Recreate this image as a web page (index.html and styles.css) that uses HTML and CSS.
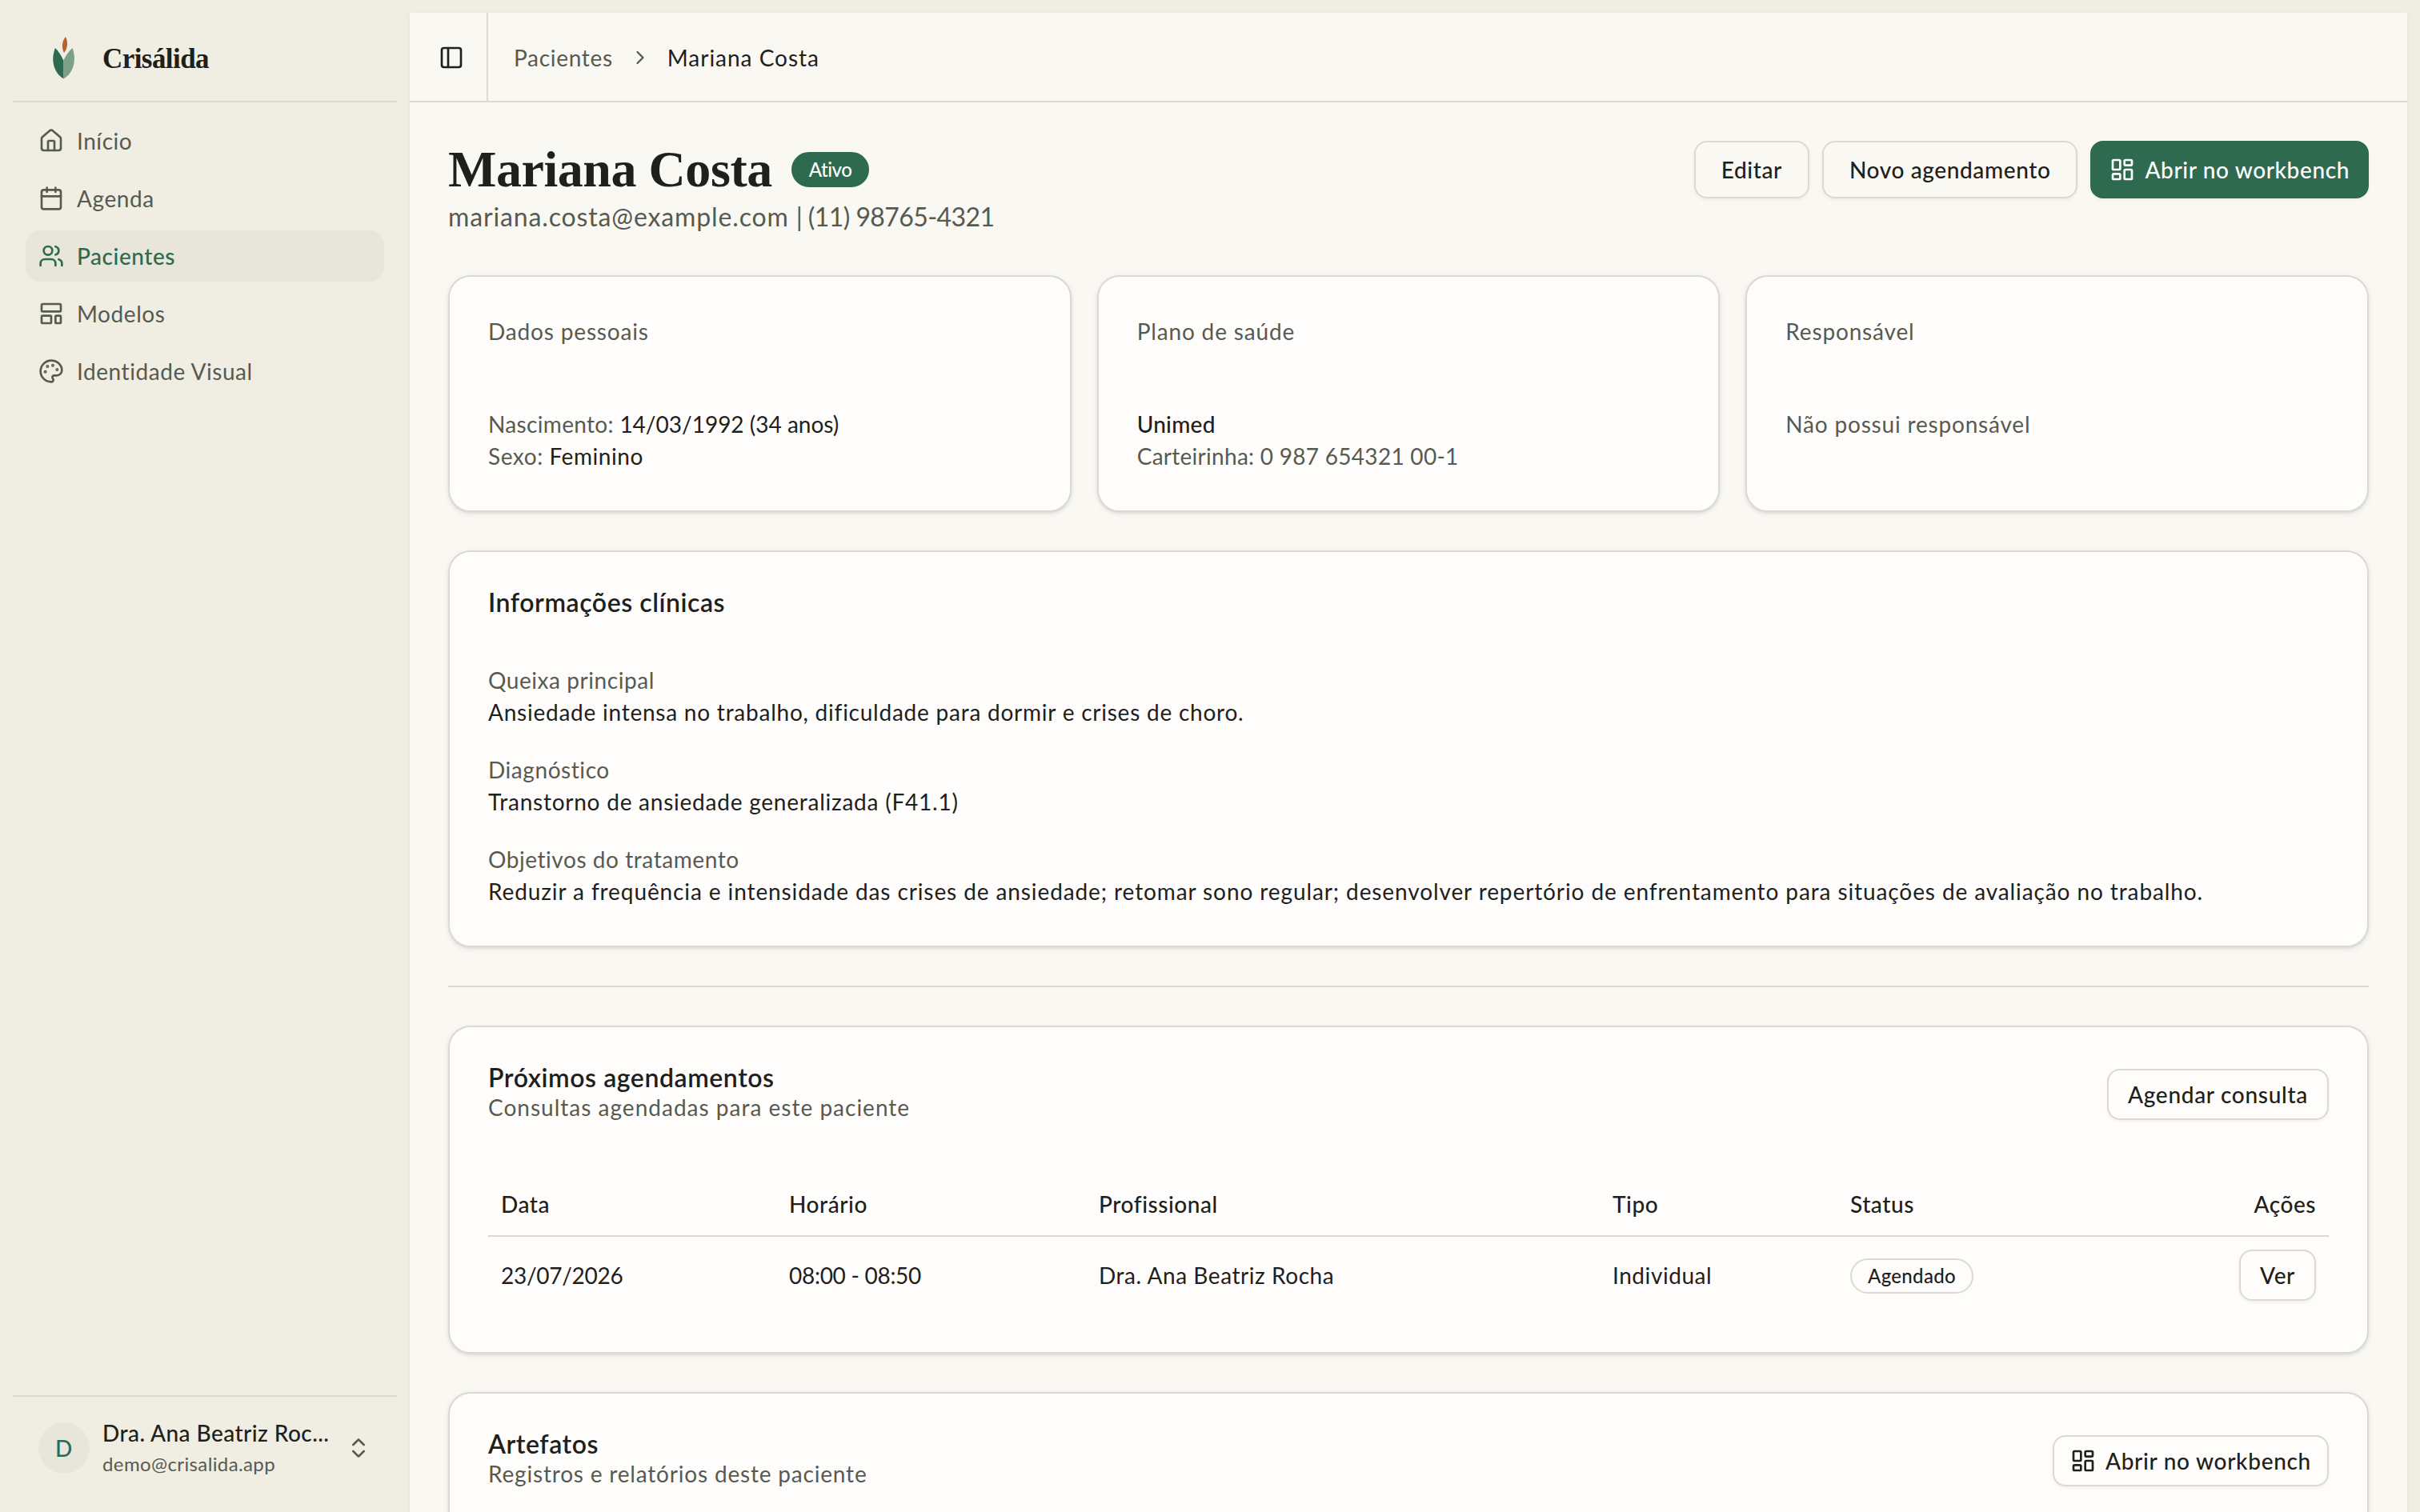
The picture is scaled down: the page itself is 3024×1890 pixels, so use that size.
FILE: index.html
```html
<!DOCTYPE html>
<html lang="pt-BR">
<head>
  <meta charset="UTF-8">
  <title>Mariana Costa - Crisálida</title>
  <link rel="stylesheet" href="styles.css">
</head>
<body>

<svg class="sprite" aria-hidden="true">
  <symbol id="icon-workbench" viewBox="0 0 24 24">
    <rect width="7" height="9" x="3" y="3" rx="1"/>
    <rect width="7" height="5" x="14" y="3" rx="1"/>
    <rect width="7" height="9" x="14" y="12" rx="1"/>
    <rect width="7" height="5" x="3" y="16" rx="1"/>
  </symbol>
</svg>

<div class="app">
  <aside class="sidebar">
    <div class="brand">
      <svg class="brand-logo" viewBox="0 0 64 64">
        <path fill="#2d6a4f" d="M21 20 C15 35 19 51 31.500 58.500 V36 C29 30 25 24 21 20 Z"/>
        <path fill="#7b9f88" d="M42.500 20 C48 35 44 51 31.500 58.500 L31 36 C34 30 38 24 42.500 20 Z"/>
        <path fill="#b5622f" d="M34 6 C29 12 29 20 32 26 C37 20 37 12 34 6 Z"/>
      </svg>
      <span class="brand-name">Crisálida</span>
    </div>

    <nav class="menu">
      <a class="menu-item" href="#">
        <svg class="icon" viewBox="0 0 24 24"><path d="M15 21v-8a1 1 0 0 0-1-1h-4a1 1 0 0 0-1 1v8"/><path d="M3 10a2 2 0 0 1 .709-1.528l7-6a2 2 0 0 1 2.582 0l7 6A2 2 0 0 1 21 10v9a2 2 0 0 1-2 2H5a2 2 0 0 1-2-2z"/></svg>
        <span>Início</span>
      </a>
      <a class="menu-item" href="#">
        <svg class="icon" viewBox="0 0 24 24"><path d="M8 2v4M16 2v4"/><rect width="18" height="18" x="3" y="4" rx="2"/><path d="M3 10h18"/></svg>
        <span>Agenda</span>
      </a>
      <a class="menu-item active" href="#">
        <svg class="icon" viewBox="0 0 24 24"><path d="M16 21v-2a4 4 0 0 0-4-4H6a4 4 0 0 0-4 4v2"/><circle cx="9" cy="7" r="4"/><path d="M16 3.128a4 4 0 0 1 0 7.744M22 21v-2a4 4 0 0 0-3-3.870"/></svg>
        <span>Pacientes</span>
      </a>
      <a class="menu-item" href="#">
        <svg class="icon" viewBox="0 0 24 24"><rect width="18" height="7" x="3" y="3" rx="1"/><rect width="9" height="7" x="3" y="14" rx="1"/><rect width="5" height="7" x="16" y="14" rx="1"/></svg>
        <span>Modelos</span>
      </a>
      <a class="menu-item" href="#">
        <svg class="icon" viewBox="0 0 24 24"><path d="M12 22a1 1 0 0 1 0-20 10 9 0 0 1 10 9 5 5 0 0 1-5 5h-2.250a1.750 1.750 0 0 0-1.400 2.800l.3.4a1.750 1.750 0 0 1-1.400 2.800z"/><circle class="dot" cx="13.500" cy="6.500" r=".5"/><circle class="dot" cx="17.500" cy="10.500" r=".5"/><circle class="dot" cx="6.500" cy="12.500" r=".5"/><circle class="dot" cx="8.500" cy="7.500" r=".5"/></svg>
        <span>Identidade Visual</span>
      </a>
    </nav>

    <div class="user">
      <div class="avatar">D</div>
      <div class="user-info">
        <div class="user-name">Dra. Ana Beatriz Roc...</div>
        <div class="user-email">demo@crisalida.app</div>
      </div>
      <svg class="icon" viewBox="0 0 24 24"><path d="m7 15 5 5 5-5M7 9l5-5 5 5"/></svg>
    </div>
  </aside>

  <main class="main">
    <header class="topbar">
      <button class="sidebar-toggle" aria-label="Menu">
        <svg class="icon" viewBox="0 0 24 24"><rect width="18" height="18" x="3" y="3" rx="2"/><path d="M9 3v18"/></svg>
      </button>
      <div class="breadcrumb">
        <span class="crumb">Pacientes</span>
        <svg class="icon crumb-arrow" viewBox="0 0 24 24"><path d="m9 18 6-6-6-6"/></svg>
        <span class="crumb current">Mariana Costa</span>
      </div>
    </header>

    <div class="content">
      <div class="page-header">
        <div>
          <div class="title-row">
            <h1>Mariana Costa</h1>
            <span class="badge badge-active">Ativo</span>
          </div>
          <p class="contact">mariana.costa@example.com <span class="phone">| (11) 98765-4321</span></p>
        </div>
        <div class="actions">
          <button class="button">Editar</button>
          <button class="button">Novo agendamento</button>
          <button class="button primary"><svg class="icon"><use href="#icon-workbench"/></svg>Abrir no workbench</button>
        </div>
      </div>

      <div class="summary">
        <section class="card">
          <h2 class="label">Dados pessoais</h2>
          <div class="summary-body">
            <p class="birth">Nascimento: <span class="value">14/03/1992 (34 anos)</span></p>
            <p>Sexo: <span class="value">Feminino</span></p>
          </div>
        </section>
        <section class="card">
          <h2 class="label">Plano de saúde</h2>
          <div class="summary-body">
            <p class="plan">Unimed</p>
            <p class="plan-number">Carteirinha: 0 987 654321 00-1</p>
          </div>
        </section>
        <section class="card">
          <h2 class="label">Responsável</h2>
          <div class="summary-body">
            <p class="empty">Não possui responsável</p>
          </div>
        </section>
      </div>

      <section class="card">
        <h2 class="card-title">Informações clínicas</h2>
        <dl class="clinical">
          <div>
            <dt>Queixa principal</dt>
            <dd>Ansiedade intensa no trabalho, dificuldade para dormir e crises de choro.</dd>
          </div>
          <div>
            <dt>Diagnóstico</dt>
            <dd>Transtorno de ansiedade generalizada (F41.1)</dd>
          </div>
          <div>
            <dt>Objetivos do tratamento</dt>
            <dd>Reduzir a frequência e intensidade das crises de ansiedade; retomar sono regular; desenvolver repertório de enfrentamento para situações de avaliação no trabalho.</dd>
          </div>
        </dl>
      </section>

      <hr class="separator">

      <section class="card">
        <div class="card-header">
          <div>
            <h2 class="card-title">Próximos agendamentos</h2>
            <p class="card-description">Consultas agendadas para este paciente</p>
          </div>
          <button class="button small">Agendar consulta</button>
        </div>
        <table class="table">
          <colgroup>
            <col class="col-date"><col class="col-time"><col class="col-pro"><col class="col-type"><col class="col-status"><col>
          </colgroup>
          <thead>
            <tr><th>Data</th><th>Horário</th><th>Profissional</th><th>Tipo</th><th>Status</th><th class="right">Ações</th></tr>
          </thead>
          <tbody>
            <tr>
              <td class="number">23/07/2026</td>
              <td class="number">08:00 - 08:50</td>
              <td>Dra. Ana Beatriz Rocha</td>
              <td>Individual</td>
              <td><span class="badge">Agendado</span></td>
              <td class="right"><button class="button small">Ver</button></td>
            </tr>
          </tbody>
        </table>
      </section>

      <section class="card artifacts">
        <div class="card-header">
          <div>
            <h2 class="card-title">Artefatos</h2>
            <p class="card-description">Registros e relatórios deste paciente</p>
          </div>
          <button class="button small with-icon"><svg class="icon"><use href="#icon-workbench"/></svg>Abrir no workbench</button>
        </div>
      </section>
    </div>
  </main>
</div>

</body>
</html>
```
FILE: styles.css
```css
:root {
  --sidebar: #f0ede2;
  --background: #faf8f3;
  --card: #fefdfb;
  --border: #dad9d2;
  --text: #1e211b;
  --muted: #575a51;
  --primary: #2d6a4f;
}

* {
  box-sizing: border-box;
}

body {
  margin: 0;
  background: var(--sidebar);
  color: var(--text);
  font-family: Lato, "Open Sans", sans-serif;
  font-size: 28px;
  line-height: 40px;
  letter-spacing: 0.02em;
}

h1, h2, p, dl, dd {
  margin: 0;
}

.sprite {
  display: none;
}

.app {
  display: flex;
  height: 1890px;
  overflow: hidden;
}

.icon {
  width: 32px;
  height: 32px;
  flex-shrink: 0;
  fill: none;
  stroke: currentColor;
  stroke-width: 2;
  stroke-linecap: round;
  stroke-linejoin: round;
}

.dot {
  fill: currentColor;
}

/* sidebar */
.sidebar {
  width: 512px;
  flex-shrink: 0;
  display: flex;
  flex-direction: column;
  padding: 16px 16px 0;
}

.brand {
  height: 112px;
  display: flex;
  align-items: center;
  gap: 16px;
  padding: 2px 0 0 32px;
  border-bottom: 2px solid var(--border);
}

.brand-logo {
  width: 64px;
  height: 64px;
}

.brand-name {
  padding-top: 3px;
  font-family: "Liberation Serif", serif;
  font-size: 35px;
  font-weight: bold;
  letter-spacing: -0.016em;
}

.menu {
  flex: 1;
  display: flex;
  flex-direction: column;
  gap: 8px;
  padding: 16px;
}

.menu-item {
  height: 64px;
  display: flex;
  align-items: center;
  gap: 16px;
  padding: 0 16px;
  border-radius: 18px;
  color: var(--muted);
  text-decoration: none;
}

.menu-item.active {
  background: #e8e5da;
  color: var(--primary);
  font-weight: 500;
}

.user {
  height: 146px;
  display: flex;
  align-items: center;
  padding: 0 32px 16px;
  border-top: 2px solid var(--border);
  color: var(--muted);
}

.avatar {
  width: 64px;
  height: 64px;
  border-radius: 50%;
  background: #e8e5da;
  color: var(--primary);
  font-weight: 500;
  line-height: 64px;
  text-align: center;
}

.user-info {
  flex: 1;
  padding-left: 16px;
}

.user-name {
  color: var(--text);
  font-weight: 500;
  letter-spacing: 0.016em;
}

.user-email {
  font-size: 24px;
  line-height: 38px;
  letter-spacing: 0.016em;
}

/* main area */
.main {
  flex: 1;
  margin: 16px 16px 0 0;
  background: var(--background);
  box-shadow: 0 2px 6px rgba(0, 0, 0, 0.06);
}

.topbar {
  height: 112px;
  display: flex;
  border-bottom: 2px solid var(--border);
}

.sidebar-toggle {
  width: 98px;
  display: flex;
  align-items: center;
  padding: 2px 0 0 36px;
  border: 0;
  border-right: 2px solid var(--border);
  background: none;
  color: var(--text);
}

.breadcrumb {
  display: flex;
  align-items: center;
  padding: 2px 0 0 32px;
  letter-spacing: 0.025em;
}

.crumb {
  color: var(--muted);
}

.crumb.current {
  color: var(--text);
  letter-spacing: 0.035em;
}

.crumb-arrow {
  width: 28px;
  height: 28px;
  margin: 0 20px;
  color: var(--muted);
}

.content {
  display: flex;
  flex-direction: column;
  gap: 48px;
  padding: 48px;
}

.page-header {
  height: 120px;
  display: flex;
  justify-content: space-between;
  align-items: flex-start;
}

.title-row {
  height: 72px;
  display: flex;
  align-items: center;
  gap: 24px;
}

h1 {
  font-family: "Liberation Serif", serif;
  font-size: 64px;
  line-height: 72px;
  letter-spacing: -0.007em;
}

.contact {
  font-size: 32px;
  line-height: 46px;
  letter-spacing: 0.027em;
  color: var(--muted);
}

.phone {
  letter-spacing: -0.018em;
}

.badge {
  display: inline-flex;
  align-items: center;
  height: 44px;
  padding: 0 20px;
  border: 2px solid var(--border);
  border-radius: 22px;
  font-size: 24px;
  font-weight: 500;
  letter-spacing: 0.013em;
  vertical-align: middle;
}

.badge-active {
  border-color: var(--primary);
  background: var(--primary);
  color: #fff;
  letter-spacing: -0.02em;
}

.actions {
  display: flex;
  gap: 16px;
}

.button {
  height: 72px;
  display: inline-flex;
  align-items: center;
  gap: 12px;
  padding: 0 32px;
  border: 2px solid var(--border);
  border-radius: 16px;
  background: transparent;
  box-shadow: 0 2px 4px rgba(0, 0, 0, 0.05);
  color: var(--text);
  font: inherit;
  font-weight: 500;
  letter-spacing: 0.022em;
  vertical-align: middle;
}

.button.primary {
  padding: 0 22px;
  border-color: var(--primary);
  background: var(--primary);
  color: #fff;
}

.button.small {
  height: 64px;
  padding: 0 24px;
}

.button.with-icon {
  padding: 0 20px;
}

.card-header .button {
  letter-spacing: 0.025em;
}

.card {
  padding: 48px;
  border: 2px solid var(--border);
  border-radius: 28px;
  background: var(--card);
  box-shadow: 0 2px 6px rgba(0, 0, 0, 0.1), 0 2px 4px -2px rgba(0, 0, 0, 0.1);
}

.summary {
  display: grid;
  grid-template-columns: repeat(3, 1fr);
  gap: 32px;
  color: var(--muted);
}

.label {
  font-size: 28px;
  font-weight: 400;
  letter-spacing: 0.03em;
}

.summary-body {
  min-height: 80px;
  margin-top: 76px;
}

.value {
  color: var(--text);
}

.birth {
  letter-spacing: 0.012em;
}

.birth .value {
  letter-spacing: 0;
}

.plan {
  color: var(--text);
  font-weight: 500;
  letter-spacing: 0.01em;
}

.plan-number {
  letter-spacing: 0.01em;
}

.empty {
  letter-spacing: 0.029em;
}

.card-title {
  position: relative;
  top: -1px;
  font-size: 32px;
  font-weight: 600;
  line-height: 32px;
}

.clinical {
  display: flex;
  flex-direction: column;
  gap: 32px;
  margin-top: 60px;
}

dt {
  color: var(--muted);
}

dd {
  letter-spacing: 0.0273em;
}

.clinical > :last-child dd {
  letter-spacing: 0.032em;
}

.separator {
  width: 100%;
  height: 2px;
  margin: 0;
  border: 0;
  background: var(--border);
}

.card-header {
  display: flex;
  justify-content: space-between;
  align-items: center;
}

.card-description {
  color: var(--muted);
  letter-spacing: 0.036em;
}

/* appointments */
.table {
  width: 100%;
  margin-top: 62px;
  border-collapse: separate;
  border-spacing: 0;
  table-layout: fixed;
}

.col-date { width: 360px; }
.col-time { width: 387px; }
.col-pro { width: 642px; }
.col-type { width: 297px; }
.col-status { width: 300px; }

.table th {
  height: 80px;
  padding: 0 16px 1px;
  border-bottom: 2px solid var(--border);
  font-weight: 500;
  text-align: left;
}

.table td {
  height: 96px;
  padding: 0 16px;
}

.table .number {
  letter-spacing: -0.01em;
}

.table .right {
  text-align: right;
}

.artifacts {
  height: 400px;
  flex-shrink: 0;
}

.artifacts .card-description {
  letter-spacing: 0.029em;
}
```
